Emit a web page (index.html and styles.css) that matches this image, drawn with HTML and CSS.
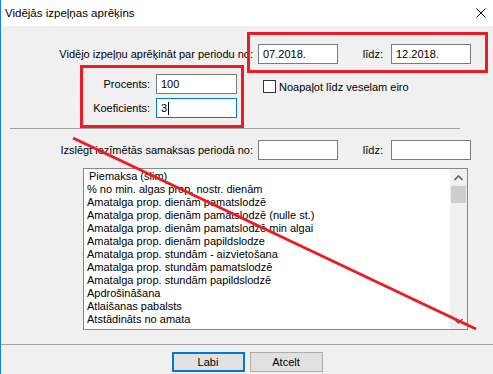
FILE: index.html
```html
<!DOCTYPE html>
<html lang="lv">
<head>
    <meta charset="UTF-8">
    <title>Vidējās izpeļņas aprēķins</title>
    <link rel="stylesheet" href="styles.css">
</head>
<body>
    <div class="window">
        <div class="titlebar">
            <span class="title">Vidējās izpeļņas aprēķins</span>
            <svg class="close" width="10" height="10" viewBox="0 0 10 10">
                <path d="M0.5 0.5 L9.5 9.5 M9.5 0.5 L0.5 9.5" stroke="#000" stroke-width="1" fill="none"/>
            </svg>
        </div>

        <div class="client">
            <div class="row">
                <span class="lbl lbl-main">Vidējo izpeļņu aprēķināt par periodu no:</span>
                <div class="edit">07.2018.</div>
                <span class="lbl lbl-to">līdz:</span>
                <div class="edit">12.2018.</div>
            </div>

            <div class="params">
                <div class="coef-grid">
                    <span class="lbl">Procents:</span>
                    <div class="edit">100</div>
                    <span class="lbl">Koeficients:</span>
                    <div class="edit focused">3<span class="caret"></span></div>
                </div>
                <div class="check">
                    <span class="box"></span>
                    <span>Noapaļot līdz veselam eiro</span>
                </div>
            </div>

            <div class="sep"></div>

            <div class="row row-exclude">
                <span class="lbl lbl-main">Izslēgt iezīmētās samaksas periodā no:</span>
                <div class="edit"></div>
                <span class="lbl lbl-to">līdz:</span>
                <div class="edit"></div>
            </div>

            <div class="listbox">
                <ul class="items">
                    <li class="current">Piemaksa (slim)</li>
                    <li>% no min. algas prop. nostr. dienām</li>
                    <li>Amatalga prop. dienām pamatslodzē</li>
                    <li>Amatalga prop. dienām pamatslodzē (nulle st.)</li>
                    <li>Amatalga prop. dienām pamatslodzē min algai</li>
                    <li>Amatalga prop. dienām papildslodze</li>
                    <li>Amatalga prop. stundām - aizvietošana</li>
                    <li>Amatalga prop. stundām pamatslodzē</li>
                    <li>Amatalga prop. stundām papildslodzē</li>
                    <li>Apdrošināšana</li>
                    <li>Atlaišanas pabalsts</li>
                    <li>Atstādināts no amata</li>
                </ul>
                <div class="vscroll">
                    <div class="arrow">
                        <svg width="9" height="6" viewBox="0 0 9 6">
                            <path d="M0.5 5 L4.5 1 L8.5 5" stroke="#606060" stroke-width="1.6" fill="none"/>
                        </svg>
                    </div>
                    <div class="thumb"></div>
                    <div class="track"></div>
                    <div class="arrow">
                        <svg width="9" height="6" viewBox="0 0 9 6">
                            <path d="M0.5 1 L4.5 5 L8.5 1" stroke="#606060" stroke-width="1.6" fill="none"/>
                        </svg>
                    </div>
                </div>
            </div>
        </div>

        <div class="footer">
            <button class="btn btn-default">Labi</button>
            <button class="btn">Atcelt</button>
        </div>
    </div>

    <!-- annotations drawn over the dialog -->
    <div class="mark mark-period"></div>
    <div class="mark mark-coef"></div>
    <svg class="strike" width="493" height="374" viewBox="0 0 493 374">
        <line x1="73" y1="138" x2="476" y2="329" stroke="#ed1c24" stroke-width="3"/>
    </svg>
</body>
</html>
```

FILE: styles.css
```css
* {
    margin: 0;
    padding: 0;
    box-sizing: border-box;
}

body {
    width: 493px;
    height: 374px;
    overflow: hidden;
    position: relative;
    background: #f0f0f0;
    font-family: 'Liberation Sans', Arial, sans-serif;
    font-size: 11px;
    color: #000;
}

.window {
    width: 493px;
    height: 374px;
    border-left: 1px solid #1883d7;
    background: #f0f0f0;
    display: flex;
    flex-direction: column;
}

.titlebar {
    height: 26px;
    background: #ffffff;
    display: flex;
    align-items: center;
    justify-content: space-between;
    padding: 0 7px 0 4px;
}

.title {
    font-size: 11.5px;
}

.client {
    display: flex;
    flex-direction: column;
}

.row {
    display: flex;
    align-items: center;
    height: 20px;
    margin-top: 18px;
}

.lbl {
    white-space: nowrap;
    text-align: right;
}

.lbl-main {
    width: 252px;
    margin-right: 5px;
}

.lbl-to {
    width: 53px;
    padding-right: 8px;
}

.edit {
    width: 80px;
    height: 20px;
    background: #ffffff;
    border: 1px solid #7a7a7a;
    padding: 0 4px;
    line-height: 18px;
    display: flex;
    align-items: center;
}

.edit.focused {
    border-color: #0078d7;
}

.caret {
    width: 1px;
    height: 13px;
    background: #000;
    margin-left: 1px;
}

.params {
    display: flex;
    margin-top: 10px;
}

.coef-grid {
    display: grid;
    grid-template-columns: 149px 81px;
    grid-auto-rows: 20px;
    column-gap: 6px;
    row-gap: 4px;
    align-items: center;
}

.coef-grid .edit {
    width: 81px;
}

.check {
    display: flex;
    align-items: center;
    gap: 3px;
    margin-left: 26px;
    margin-top: 5px;
    height: 15px;
    align-self: flex-start;
}

.box {
    width: 13px;
    height: 13px;
    background: #ffffff;
    border: 1px solid #333333;
}

.sep {
    width: 450px;
    height: 1px;
    margin: 10px 0 0 9px;
    background: #a0a0a0;
}

.row-exclude {
    margin-top: 11px;
}

.listbox {
    width: 385px;
    height: 162px;
    margin: 8px 0 0 82px;
    background: #ffffff;
    border: 1px solid #828790;
    display: flex;
    overflow: hidden;
}

.items {
    list-style: none;
    flex: 1;
    padding: 1px 0 0 3px;
    overflow: hidden;
}

.items li {
    height: 13px;
    line-height: 13px;
    white-space: nowrap;
}

.items li.current {
    padding-left: 2px;
}

.vscroll {
    width: 17px;
    background: #f0f0f0;
    display: flex;
    flex-direction: column;
    align-items: center;
}

.arrow {
    width: 17px;
    height: 17px;
    display: flex;
    align-items: center;
    justify-content: center;
}

.thumb {
    width: 15px;
    height: 17px;
    background: #cdcdcd;
}

.track {
    flex: 1;
}

.footer {
    margin-top: 14px;
    border-top: 1px solid #a0a0a0;
    display: flex;
    justify-content: center;
    gap: 5px;
    padding-top: 7px;
}

.btn {
    width: 73px;
    height: 20px;
    background: #e1e1e1;
    border: 1px solid #adadad;
    font-family: 'Liberation Sans', Arial, sans-serif;
    font-size: 11px;
    color: #000;
}

.btn-default {
    border: 2px solid #0078d7;
}

.mark {
    position: absolute;
    border: 3px solid #ed1c24;
}

.mark-period {
    left: 247px;
    top: 32px;
    width: 241px;
    height: 41px;
}

.mark-coef {
    left: 80px;
    top: 65px;
    width: 164px;
    height: 63px;
}

.strike {
    position: absolute;
    left: 0;
    top: 0;
    pointer-events: none;
}
```
